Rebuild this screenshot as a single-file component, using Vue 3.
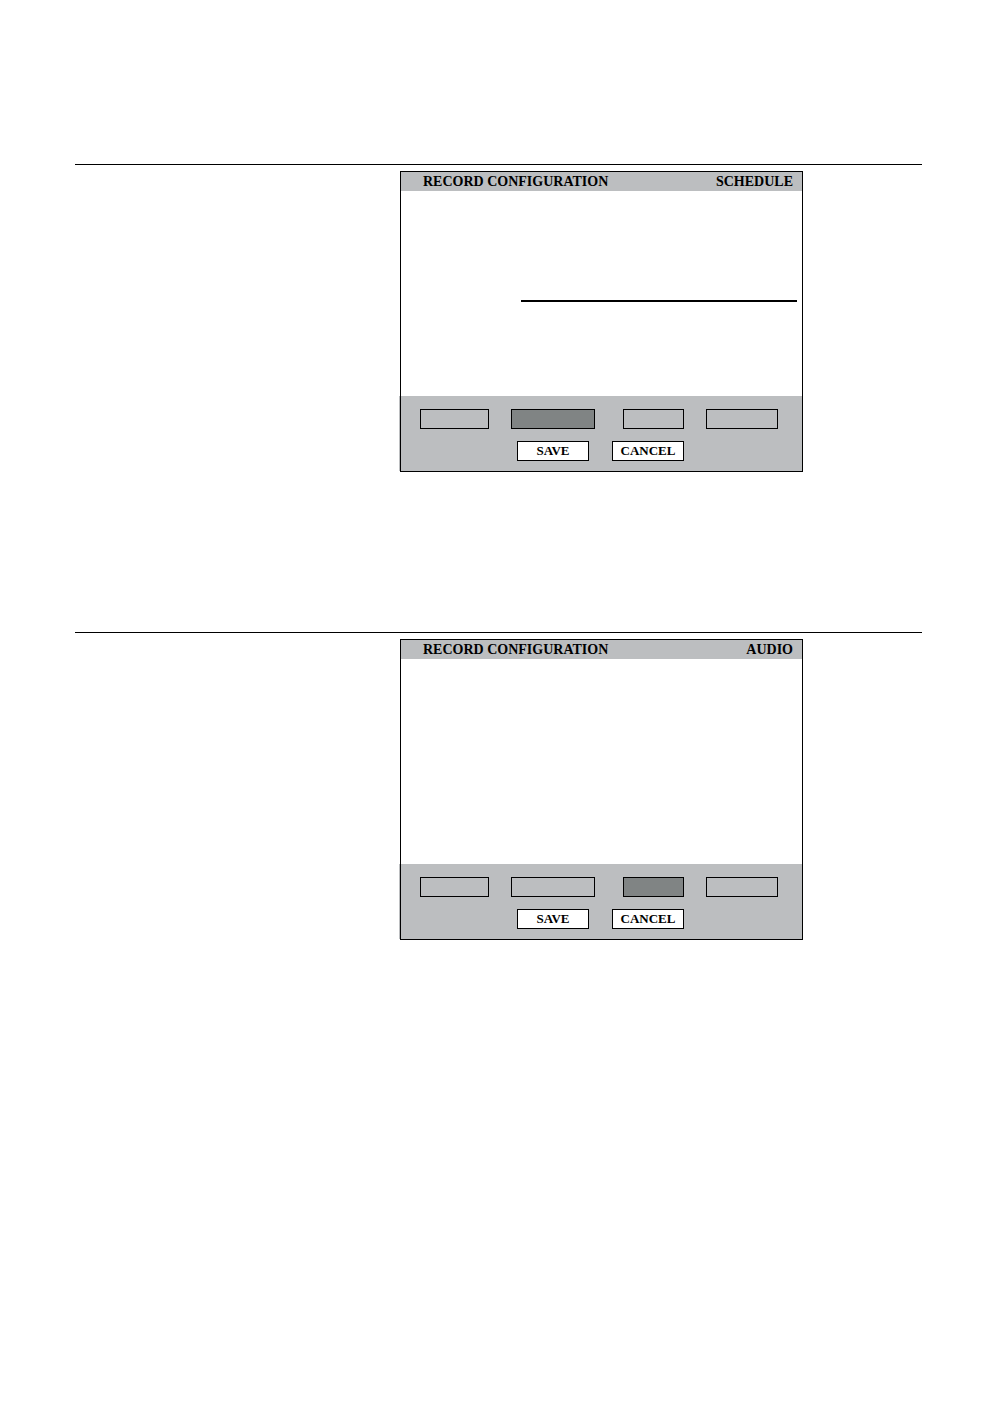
<script setup>
import { ref } from 'vue'

const tabs = [
  { id: 'general', label: 'General' },
  { id: 'schedule', label: 'Schedule' },
  { id: 'audio', label: 'Audio' },
  { id: 'advanced', label: 'Advanced' }
]

const screens = ref([
  { id: 1, title: 'SCHEDULE', active: 'schedule', divider: true },
  { id: 2, title: 'AUDIO', active: 'audio', divider: false }
])
</script>

<template>
  <main class="page">
    <section v-for="screen in screens" :key="screen.id" class="entry">
      <form class="screen" @submit.prevent>
        <header class="screen-header">
          <h2>RECORD CONFIGURATION</h2>
          <h2>{{ screen.title }}</h2>
        </header>

        <div class="screen-body">
          <hr v-if="screen.divider" />
        </div>

        <footer class="screen-footer">
          <nav class="tabs">
            <button
              v-for="tab in tabs"
              :key="tab.id"
              type="button"
              :aria-label="tab.label"
              :class="[tab.id, { active: tab.id === screen.active }]"
              @click="screen.active = tab.id"
            ></button>
          </nav>
          <div class="actions">
            <button type="submit">SAVE</button>
            <button type="button">CANCEL</button>
          </div>
        </footer>
      </form>
    </section>
  </main>
</template>

<style>
body {
  margin: 0;
  background-color: #fff;
}
</style>

<style scoped>
* {
  box-sizing: border-box;
  margin: 0;
  padding: 0;
  font-family: "Liberation Serif", serif;
}

.page {
  padding: 164px 76px 0 75px;
}

.entry {
  display: grid;
  grid-template-columns: 325fr 403px 119fr;
  align-items: start;
  min-height: 468px;
  padding-top: 6px;
  border-top: 1px solid #000;
}

.screen {
  grid-column: 2;
  border: 1px solid #000;
  color: #000;
}

.screen-header {
  display: flex;
  justify-content: space-between;
  padding: 0 9px 0 22px;
  background-color: #bcbec0;
}

.screen-header h2 {
  font-size: 14px;
  line-height: 19px;
  font-weight: bold;
}

.screen-body {
  height: 205px;
  padding: 109px 5px 0 120px;
}

.screen-body hr {
  border: none;
  border-top: 2px solid #000;
}

.screen-footer {
  position: relative;
  padding: 13px 24px 10px 19px;
  background-color: #bcbec0;
}

/* grey sliver just outside the left frame line */
.screen-footer::before {
  content: "";
  position: absolute;
  top: 0;
  bottom: 0;
  left: -2px;
  width: 1px;
  background-color: #bcbec0;
}

.tabs {
  display: grid;
  grid-template-columns: 69px 84px 67px 72px;
  justify-content: space-between;
  margin-bottom: 12px;
}

.tabs .audio {
  margin-left: 6px;
}

.actions {
  display: flex;
  gap: 23px;
  padding-left: 97px;
}

button {
  height: 20px;
  border: 1px solid #000;
  background-color: transparent;
  color: #000;
  font-size: 13px;
  line-height: 18px;
  font-weight: bold;
  cursor: pointer;
}

.tabs .active {
  background-color: #808484;
}

.actions button {
  width: 72px;
  background-color: #fff;
}
</style>
